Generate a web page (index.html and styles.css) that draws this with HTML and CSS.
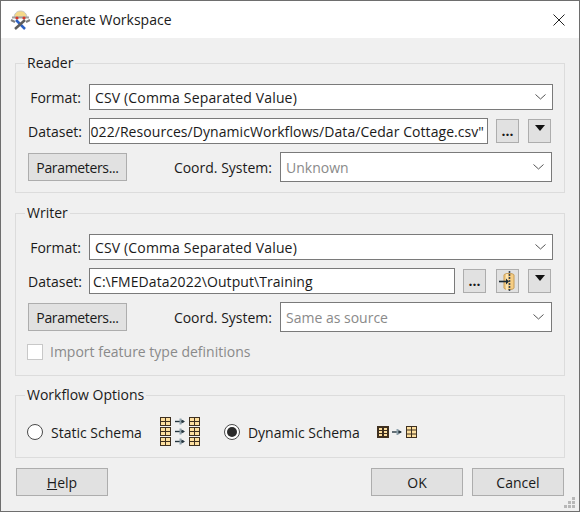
FILE: index.html
```html
<!DOCTYPE html>
<html lang="en">
<head>
  <meta charset="UTF-8">
  <title>Generate Workspace</title>
  <link rel="stylesheet" href="styles.css">
</head>
<body>
  <svg class="defs" width="0" height="0">
    <defs>
      <g id="tbl">
        <rect x="0.5" y="0.5" width="10" height="8" fill="#fddf9f" stroke="#3f3020"/>
        <path d="M5.5 0.5V8.5M0.5 4.5H10.5" stroke="#3f3020" fill="none"/>
      </g>
      <g id="arr">
        <path d="M0 3.5H9" stroke="#24353f" stroke-width="1.4"/>
        <path d="M5.5 0.5V6.5" stroke="#8fa3ad" stroke-width="2"/>
        <path d="M6.5 1.5L10 3.5L6.5 5.5Z" fill="#24353f"/>
      </g>
    </defs>
  </svg>
  <div class="window">
    <div class="titlebar">
      <svg class="app-icon" width="21" height="20" viewBox="0 0 21 20">
        <path d="M4 7C5 2 8 1 10.5 1S16 2 17 7Z" fill="#f4d98a" stroke="#c4c4c4"/>
        <path d="M2 7.5H19" stroke="#a0a0a0" stroke-width="2"/>
        <circle cx="7" cy="8" r="1.6" fill="#d8392b"/>
        <circle cx="14" cy="8" r="1.6" fill="#d8392b"/>
        <path d="M6 10L15 19" stroke="#2c62c4" stroke-width="2.5"/>
        <path d="M15 10L5 19" stroke="#5d5d5d" stroke-width="2.5"/>
        <path d="M1 10L5 12M20 10L16 12" stroke="#7d7d7d" stroke-width="2"/>
      </svg>
      <span class="title">Generate Workspace</span>
      <svg class="close" width="12" height="12" viewBox="0 0 12 12">
        <path d="M0.5 0.5L11.5 11.5M11.5 0.5L0.5 11.5" stroke="#222" stroke-width="1" fill="none"/>
      </svg>
    </div>

    <div class="content">
      <fieldset class="group group-reader">
        <legend>Reader</legend>
        <div class="row row-short">
          <label class="field-label">Format:</label>
          <div class="combo combo-wide"><span>CSV (Comma Separated Value)</span><svg class="chevron" width="11" height="6" viewBox="0 0 11 6"><path d="M0.5 0.5L5.5 5L10.5 0.5" stroke="#555" fill="none"/></svg></div>
        </div>
        <div class="row row-short">
          <label class="field-label">Dataset:</label>
          <div class="text-input clipped"><span>022/Resources/DynamicWorkflows/Data/Cedar Cottage.csv"</span></div>
          <button class="btn-small btn-dots">...</button>
          <button class="btn-small btn-drop"><span class="tri"></span></button>
        </div>
        <div class="row row-tall">
          <button class="btn btn-params">Parameters...</button>
          <label class="coord-label">Coord. System:</label>
          <div class="combo combo-coord muted"><span>Unknown</span><svg class="chevron" width="11" height="6" viewBox="0 0 11 6"><path d="M0.5 0.5L5.5 5L10.5 0.5" stroke="#555" fill="none"/></svg></div>
        </div>
      </fieldset>

      <fieldset class="group group-writer">
        <legend>Writer</legend>
        <div class="row row-short">
          <label class="field-label">Format:</label>
          <div class="combo combo-wide"><span>CSV (Comma Separated Value)</span><svg class="chevron" width="11" height="6" viewBox="0 0 11 6"><path d="M0.5 0.5L5.5 5L10.5 0.5" stroke="#555" fill="none"/></svg></div>
        </div>
        <div class="row row-short">
          <label class="field-label">Dataset:</label>
          <div class="text-input"><span>C:\FMEData2022\Output\Training</span></div>
          <button class="btn-small btn-dots">...</button>
          <button class="btn-small btn-db">
            <svg width="20" height="22" viewBox="0 0 20 22">
              <path d="M6 5C6 3 16 3 16 5V18C16 20 6 20 6 18Z" fill="#f6cd83" stroke="#c49a55"/>
              <path d="M9 4V20" stroke="#fbe6b8" stroke-width="2"/>
              <path d="M11.5 1V21" stroke="#3c4650" stroke-width="1.6" stroke-dasharray="2 1"/>
              <path d="M1 11.5H9" stroke="#1c2a33" stroke-width="1.6"/>
              <path d="M8 8.5L11 11.5L8 14.5Z" fill="#1c2a33"/>
            </svg>
          </button>
          <button class="btn-small btn-drop"><span class="tri"></span></button>
        </div>
        <div class="row row-tall">
          <button class="btn btn-params">Parameters...</button>
          <label class="coord-label">Coord. System:</label>
          <div class="combo combo-coord muted"><span>Same as source</span><svg class="chevron" width="11" height="6" viewBox="0 0 11 6"><path d="M0.5 0.5L5.5 5L10.5 0.5" stroke="#555" fill="none"/></svg></div>
        </div>
        <div class="check-row">
          <span class="checkbox"></span>
          <span class="muted">Import feature type definitions</span>
        </div>
      </fieldset>

      <fieldset class="group group-workflow">
        <legend>Workflow Options</legend>
        <div class="options">
          <span class="radio"></span>
          <span class="opt-text">Static Schema</span>
          <svg class="icon-static" width="41" height="30" viewBox="0 0 41 30">
            <use href="#tbl" x="0" y="0"/><use href="#tbl" x="0" y="10"/><use href="#tbl" x="0" y="20"/>
            <use href="#arr" x="15" y="1"/><use href="#arr" x="15" y="11"/><use href="#arr" x="15" y="21"/>
            <use href="#tbl" x="29" y="0"/><use href="#tbl" x="29" y="10"/><use href="#tbl" x="29" y="20"/>
          </svg>
          <span class="radio checked"></span>
          <span class="opt-text">Dynamic Schema</span>
          <svg class="icon-dynamic" width="41" height="13" viewBox="0 0 41 13">
            <rect x="0" y="0" width="12" height="12" fill="#3f3020"/>
            <path d="M2 2H5V4H2ZM7 2H10V4H7ZM2 5H5V7H2ZM7 5H10V7H7ZM2 8H5V10H2ZM7 8H10V10H7Z" fill="#fddf9f"/>
            <use href="#arr" x="15" y="2.5"/>
            <rect x="29.5" y="0.5" width="10" height="11" fill="#fddf9f" stroke="#3f3020"/>
            <path d="M34.5 0.5V11.5M29.5 4H39.5M29.5 8H39.5" stroke="#3f3020" fill="none"/>
          </svg>
        </div>
      </fieldset>

      <div class="footer">
        <button class="btn btn-footer"><u>H</u>elp</button>
        <div class="footer-right">
          <button class="btn btn-footer">OK</button>
          <button class="btn btn-footer">Cancel</button>
        </div>
      </div>
    </div>

    <svg class="grip" width="12" height="12" viewBox="0 0 12 12" fill="#b8b8b8">
      <path d="M8 0h3v3H8zM4 4h3v3H4zM8 4h3v3H8zM0 8h3v3H0zM4 8h3v3H4zM8 8h3v3H8z"/>
    </svg>
  </div>
</body>
</html>
```

FILE: styles.css
```css
/* General styles */
html, body {
  margin: 0;
  padding: 0;
}

body {
  width: 580px;
  height: 512px;
  overflow: hidden;
  font-family: "Open Sans", "Noto Sans", sans-serif;
  font-size: 14px;
  color: #1a1a1a;
}

.defs {
  position: absolute;
}

.window {
  position: relative;
  box-sizing: border-box;
  width: 580px;
  height: 512px;
  border: 1px solid #6e6e6e;
  background-color: #f0f0f0;
}

/* Title bar */
.titlebar {
  display: flex;
  align-items: center;
  height: 37px;
  padding: 0 14px 0 9px;
  background-color: #fff;
}

.app-icon {
  margin-right: 4px;
}

.title {
  flex: 1;
  font-size: 14px;
}

/* Group boxes */
.content {
  padding: 0 14px 0 14px;
}

.group {
  margin: 0;
  padding: 0 11px 0 12px;
  min-width: 0;
  border: 1px solid #dcdcdc;
}

.group legend {
  margin-left: -3px;
  padding: 0 2px;
  font-size: 14px;
  line-height: 18px;
}

.group-reader {
  margin-top: 16px;
  height: 137px;
}

.group-writer {
  margin-top: 11px;
  height: 170px;
}

.group-workflow {
  margin-top: 10px;
  height: 70px;
}

/* Rows */
.row {
  display: flex;
  align-items: center;
  margin-top: 8px;
}

.group .row:first-of-type {
  margin-top: 12px;
}

.row-short {
  height: 26px;
}

.row-tall {
  height: 30px;
}

.field-label {
  width: 53px;
  margin-right: 8px;
  text-align: right;
}

.coord-label {
  width: 145px;
  margin-right: 8px;
  text-align: right;
}

/* Inputs */
.combo,
.text-input {
  display: flex;
  align-items: center;
  box-sizing: border-box;
  height: 100%;
  padding: 0 3px 0 5px;
  border: 1px solid #7a7a7a;
  background-color: #fff;
  white-space: nowrap;
}

.combo {
  justify-content: space-between;
}

.combo-wide {
  flex: 1;
  padding-right: 6px;
  letter-spacing: 0.15px;
}

.combo-coord {
  width: 272px;
  padding-right: 7px;
}

.text-input {
  flex: 1;
  min-width: 0;
  overflow: hidden;
  padding-left: 3px;
  letter-spacing: 0.06px;
}

.clipped {
  justify-content: flex-end;
}

.muted {
  color: #8a8a8a;
}

/* Buttons */
.btn,
.btn-small {
  box-sizing: border-box;
  border: 1px solid #adadad;
  background-color: #e1e1e1;
  font-family: inherit;
  font-size: 14px;
  color: #1a1a1a;
  padding: 0;
}

.btn-params {
  width: 99px;
  height: 28px;
  letter-spacing: -0.35px;
}

.btn-small {
  display: flex;
  align-items: center;
  justify-content: center;
  width: 23px;
  height: 24px;
  flex: none;
}

.btn-dots {
  margin-left: 8px;
  font-weight: 700;
  line-height: 20px;
}

.btn-db {
  margin-left: 10px;
  width: 23px;
}

.btn-drop {
  margin-left: 9px;
  margin-right: 2px;
}

.tri {
  width: 0;
  height: 0;
  margin-bottom: 6px;
  border-left: 5px solid transparent;
  border-right: 5px solid transparent;
  border-top: 6px solid #111;
}

/* Checkbox and radios */
.check-row {
  display: flex;
  align-items: center;
  gap: 7px;
  margin-top: 10px;
}

.checkbox {
  box-sizing: border-box;
  width: 16px;
  height: 16px;
  margin-left: -1px;
  border: 1px solid #c8c8c8;
  background-color: #fff;
}

.options {
  display: flex;
  align-items: center;
  height: 30px;
  margin-top: 13px;
  margin-left: -1px;
}

.radio {
  position: relative;
  box-sizing: border-box;
  width: 16px;
  height: 16px;
  border: 1px solid #4a4a4a;
  border-radius: 50%;
  background-color: #fff;
}

.radio.checked::after {
  content: "";
  position: absolute;
  top: 2px;
  left: 2px;
  width: 10px;
  height: 10px;
  border-radius: 50%;
  background-color: #2b2b2b;
}

.opt-text {
  margin-left: 8px;
}

.icon-static {
  margin-left: 18px;
  margin-right: 23px;
}

.icon-dynamic {
  margin-left: 17px;
}

/* Footer */
.footer {
  display: flex;
  justify-content: space-between;
  margin-top: 10px;
  padding: 0 1px;
}

.footer-right {
  display: flex;
  gap: 9px;
}

.btn-footer {
  width: 92px;
  height: 28px;
}

.grip {
  position: absolute;
  right: 3px;
  bottom: 2px;
}
```
